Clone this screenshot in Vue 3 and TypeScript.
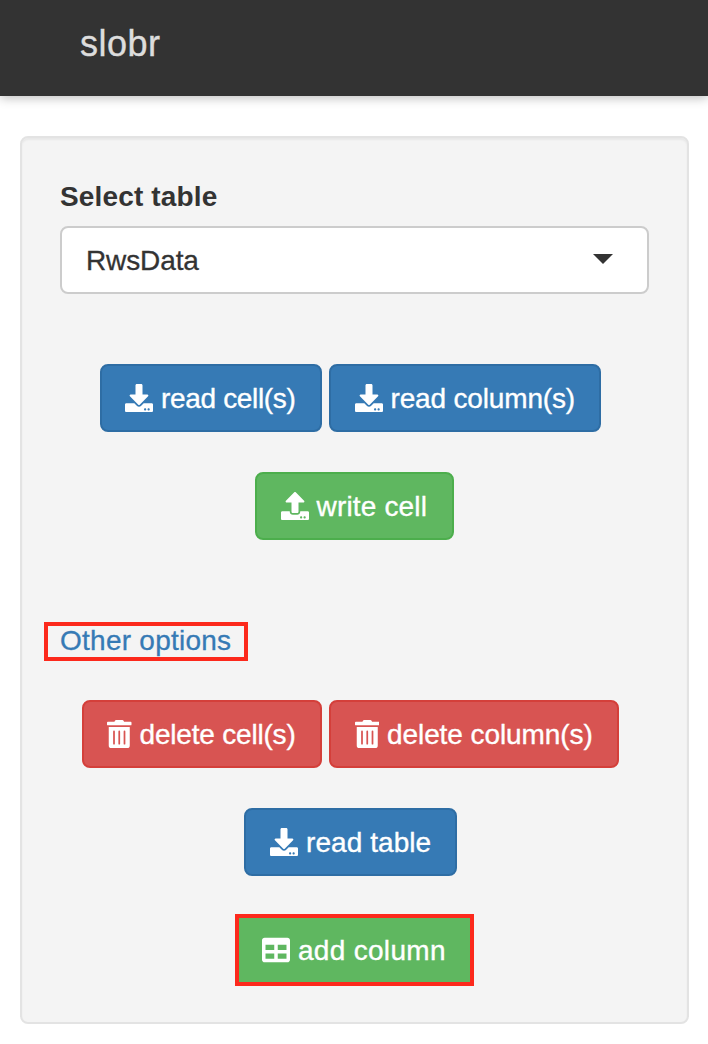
<script setup lang="ts">
import { ref } from 'vue'

type IconName = 'download' | 'upload' | 'trash' | 'table'
interface Action {
  id: string
  label: string
  icon: IconName
  tone: 'primary' | 'success' | 'danger'
}

const dots =
  'zm-124 88c0-11-9-20-20-20s-20 9-20 20 9 20 20 20 20-9 20-20zm64 0c0-11-9-20-20-20s-20 9-20 20 9 20 20 20 20-9 20-20z'

const icons: Record<IconName, { box: string; d: string }> = {
  download: {
    box: '0 0 512 512',
    d: 'M216 0h80c13.3 0 24 10.7 24 24v168h87.7c17.8 0 26.7 21.5 14.1 34.1L269.7 378.3c-7.5 7.5-19.8 7.5-27.3 0L90.1 226.1c-12.6-12.6-3.7-34.1 14.1-34.1H192V24c0-13.3 10.7-24 24-24zm296 376v112c0 13.3-10.7 24-24 24H24c-13.3 0-24-10.7-24-24V376c0-13.3 10.7-24 24-24h146.7l49 49c20.1 20.1 52.5 20.1 72.6 0l49-49H488c13.3 0 24 10.7 24 24' + dots,
  },
  upload: {
    box: '0 0 512 512',
    d: 'M296 384h-80c-13.3 0-24-10.7-24-24V192h-87.7c-17.8 0-26.7-21.5-14.1-34.1L242.3 5.7c7.5-7.5 19.8-7.5 27.3 0l152.2 152.2c12.6 12.6 3.7 34.1-14.1 34.1H320v168c0 13.3-10.7 24-24 24zm216-8v112c0 13.3-10.7 24-24 24H24c-13.3 0-24-10.7-24-24V376c0-13.3 10.7-24 24-24h136v8c0 30.9 25.1 56 56 56h80c30.9 0 56-25.1 56-56v-8h136c13.3 0 24 10.7 24 24' + dots,
  },
  trash: {
    box: '0 0 448 512',
    d: 'M32 464a48 48 0 0 0 48 48h288a48 48 0 0 0 48-48V128H32zm272-256a16 16 0 0 1 32 0v224a16 16 0 0 1-32 0zm-96 0a16 16 0 0 1 32 0v224a16 16 0 0 1-32 0zm-96 0a16 16 0 0 1 32 0v224a16 16 0 0 1-32 0zM432 32H312l-9.4-18.7A24 24 0 0 0 281.1 0H166.8a23.72 23.72 0 0 0-21.4 13.3L136 32H16A16 16 0 0 0 0 48v32a16 16 0 0 0 16 16h416a16 16 0 0 0 16-16V48a16 16 0 0 0-16-16z',
  },
  table: {
    box: '0 0 512 512',
    d: 'M464 32H48C21.49 32 0 53.49 0 80v352c0 26.51 21.49 48 48 48h416c26.51 0 48-21.49 48-48V80c0-26.51-21.49-48-48-48zM224 416H64v-96h160v96zm0-160H64v-96h160v96zm224 160H288v-96h160v96zm0-160H288v-96h160v96z',
  },
}

const mainRows: Action[][] = [
  [
    { id: 'read-cells', label: 'read cell(s)', icon: 'download', tone: 'primary' },
    { id: 'read-columns', label: 'read column(s)', icon: 'download', tone: 'primary' },
  ],
  [{ id: 'write-cell', label: 'write cell', icon: 'upload', tone: 'success' }],
]

const otherRows: Action[][] = [
  [
    { id: 'delete-cells', label: 'delete cell(s)', icon: 'trash', tone: 'danger' },
    { id: 'delete-columns', label: 'delete column(s)', icon: 'trash', tone: 'danger' },
  ],
  [{ id: 'read-table', label: 'read table', icon: 'download', tone: 'primary' }],
  [{ id: 'add-column', label: 'add column', icon: 'table', tone: 'success' }],
]

const groups = [
  { name: 'main', rows: mainRows },
  { name: 'other', rows: otherRows },
]
const selected = ref('RwsData')
</script>

<template>
  <div class="page">
    <header class="navbar"><span class="brand">slobr</span></header>
    <main class="well">
      <label class="field-label">Select table</label>
      <div class="select">
        <span class="value">{{ selected }}</span>
        <i class="caret"></i>
      </div>
      <template v-for="group in groups" :key="group.name">
        <a v-if="group.name === 'other'" class="toggle">Other options</a>
        <section class="group" :class="group.name">
          <div v-for="(row, i) in group.rows" :key="i" class="row" :class="{ pair: row.length > 1 }">
            <button v-for="a in row" :key="a.id" type="button" class="btn" :class="[a.tone, a.id]">
              <svg class="icon" :class="a.icon" :viewBox="icons[a.icon].box"><path :d="icons[a.icon].d" /></svg>
              <span class="text">{{ a.label }}</span>
            </button>
          </div>
        </section>
      </template>
    </main>
  </div>
</template>

<style>
body {
  margin: 0;
  background: #fff;
}
</style>

<style scoped>
.page {
  height: 1044px;
  overflow: hidden;
  font: 28px/40px 'Liberation Sans', Arial, sans-serif;
  color: #333;
}
.navbar {
  box-sizing: border-box;
  height: 96px;
  padding: 24px 80px 0;
  background: #333;
  box-shadow: 0 2px 10px rgba(0, 0, 0, 0.26);
}
.brand {
  display: block;
  font-size: 36px;
  letter-spacing: 0.5px;
  color: #ddd;
  -webkit-text-stroke: 0.4px;
}
.well {
  box-sizing: border-box;
  width: 669px;
  height: 888px;
  margin: 40px 0 0 20px;
  padding: 39px 38px 38px;
  border: 2px solid #e3e3e3;
  border-radius: 8px;
  background: #f4f4f4;
  box-shadow: inset 0 2px 2px rgba(0, 0, 0, 0.05);
}
.field-label {
  display: block;
  margin-bottom: 9px;
  font-weight: bold;
  letter-spacing: 0.15px;
}
.select {
  box-sizing: border-box;
  display: flex;
  align-items: center;
  justify-content: space-between;
  width: 589px;
  height: 68px;
  padding: 0 34px 0 24px;
  border: 2px solid #ccc;
  border-radius: 8px;
  background: #fff;
}
.value {
  padding-top: 2px;
  letter-spacing: -0.12px;
  -webkit-text-stroke: 0.3px;
}
.caret {
  margin-bottom: 2px;
  border: 10px solid transparent;
  border-top-color: #333;
  border-bottom: 0;
}
.group {
  display: flex;
  flex-direction: column;
  gap: 40px;
}
.main {
  margin-top: 70px;
}
.other {
  margin-top: 39px;
}
.row {
  display: flex;
  justify-content: center;
  gap: 7px;
}
.pair {
  margin-right: 9px;
}
.btn {
  box-sizing: border-box;
  display: flex;
  align-items: center;
  height: 68px;
  padding: 0 0 0 23.6px;
  border: 2px solid;
  border-radius: 8px;
  font: inherit;
  color: #fff;
}
.primary {
  background: #367ab5;
  border-color: #2e6da4;
}
.success {
  background: #5fb760;
  border-color: #4cae4c;
}
.danger {
  background: #d85452;
  border-color: #d43f3a;
}
.icon {
  flex: none;
  width: 28px;
  height: 28px;
  margin: 0 8px 1px 0;
  fill: currentColor;
}
.trash {
  width: 24.5px;
}
.text {
  padding-top: 2px;
  white-space: nowrap;
  -webkit-text-stroke: 0.35px;
}
.read-cells {
  width: 222px;
  letter-spacing: -0.34px;
}
.read-columns {
  width: 272px;
  padding-left: 24px;
  letter-spacing: -0.16px;
}
.write-cell {
  width: 199px;
  letter-spacing: 0.15px;
}
.delete-cells {
  width: 240px;
  letter-spacing: -0.2px;
}
.delete-columns {
  width: 290px;
  padding-left: 24px;
  letter-spacing: -0.08px;
}
.read-table {
  width: 213px;
  margin-right: 8px;
  padding-left: 24px;
  letter-spacing: 0.07px;
}
.add-column {
  width: 231px;
  height: 64px;
  margin: 2px 0;
  padding-left: 21px;
  border-color: #5fb760;
  border-radius: 0;
  outline: 4px solid #fc291c;
  letter-spacing: 0.3px;
}
.toggle {
  box-sizing: border-box;
  display: block;
  width: 204px;
  height: 39px;
  margin: 82px 0 0 -16px;
  padding-left: 12px;
  border: 4px solid #fc291c;
  line-height: 29px;
  letter-spacing: 0.25px;
  color: #367ab5;
  -webkit-text-stroke: 0.3px;
}
</style>
